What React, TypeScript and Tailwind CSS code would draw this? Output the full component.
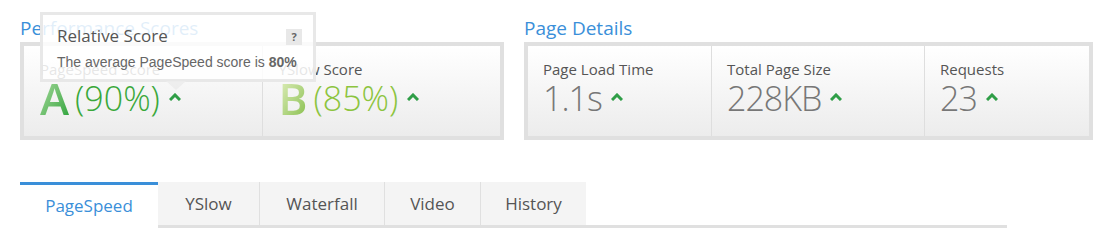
import React from 'react'

const font = { fontFamily: '"Open Sans", "Noto Sans", sans-serif' }

function Caret() {
  return (
    <svg width="12" height="8" viewBox="0 0 12 8" className="ml-[9px] mt-[-3px]">
      <path d="M1 7 L6 2 L11 7" fill="none" stroke="#2f9e47" strokeWidth="3" />
    </svg>
  )
}

function ScoreCell({ label, grade, pct, gradeClass, pctClass, last }: { label: string; grade: string; pct: string; gradeClass: string; pctClass: string; last?: boolean }) {
  return (
    <div className={`flex-1 pl-[16px] pt-[13px] ${last ? '' : 'border-r border-[#dedede]'}`}>
      <div className="text-[15px] leading-[20px] text-[#555]">{label}</div>
      <div className="flex items-center h-[42px] -mt-[2px]">
        <span className={`text-[44px] leading-[44px] font-semibold bg-clip-text text-transparent ${gradeClass}`}>{grade}</span>
        <span className={`text-[34px] leading-[40px] font-light ml-[6px] ${pctClass}`}>{pct}</span>
        <Caret />
      </div>
    </div>
  )
}

function DetailCell({ label, value, width, last }: { label: string; value: string; width: string; last?: boolean }) {
  return (
    <div className={`${width} pl-[15px] pt-[13px] ${last ? '' : 'border-r border-[#dedede]'}`}>
      <div className="text-[15px] leading-[20px] text-[#555]">{label}</div>
      <div className="flex items-center h-[42px] -mt-[2px]">
        <span className="text-[34px] leading-[40px] font-light text-[#777] tracking-[-1px]">{value}</span>
        <Caret />
      </div>
    </div>
  )
}

export default function App() {
  const tabs = ['YSlow', 'Waterfall', 'Video', 'History']
  const tabW = ['w-[102px]', 'w-[125px]', 'w-[96px]', 'w-[105px]']
  return (
    <div className="w-[1111px] h-[243px] bg-white pl-[20px] pt-[14px]" style={font}>
      <div className="flex gap-[20px]">
        <div className="w-[484px] relative">
          <h2 className="text-[19px] leading-[28px] text-[#3a8fd9]">Performance Scores</h2>
          <div className="flex h-[98px] border-4 border-[#e0e0e0] bg-gradient-to-b from-white to-[#ececec]">
            <ScoreCell label="PageSpeed Score" grade="A" pct="(90%)" gradeClass="bg-gradient-to-br from-[#a8dca0] to-[#27a33a]" pctClass="text-[#3aa83a]" />
            <ScoreCell label="YSlow Score" grade="B" pct="(85%)" gradeClass="bg-gradient-to-br from-[#e4f0c0] to-[#84bd44]" pctClass="text-[#8cc43e]" last />
          </div>
          <div className="absolute left-[20px] top-[-2px] w-[276px] h-[70px] border-[3px] border-[#e6e6e6]/90 bg-white/85 pl-[14px] pt-[10px]">
            <div className="flex items-center justify-between pr-[11px]">
              <span className="text-[17px] leading-[22px] text-[#555]">Relative Score</span>
              <span className="w-[16px] h-[16px] bg-[#e8e8e8] text-[11px] leading-[16px] text-center font-bold text-[#666] mt-[1px]">?</span>
            </div>
            <div className="mt-[6px] text-[14px] leading-[18px] text-[#666]" style={{ fontFamily: '"Liberation Sans", Arial, sans-serif' }}>
              The average PageSpeed score is <b>80%</b>
            </div>
            <div className="absolute left-[123px] bottom-[-11px] w-0 h-0 border-l-[10px] border-r-[10px] border-t-[9px] border-l-transparent border-r-transparent border-t-[#ececec]/90" />
          </div>
        </div>
        <div className="w-[569px]">
          <h2 className="text-[19px] leading-[28px] text-[#3a8fd9]">Page Details</h2>
          <div className="flex h-[98px] border-4 border-[#e0e0e0] bg-gradient-to-b from-white to-[#ececec]">
            <DetailCell label="Page Load Time" value="1.1s" width="w-[184px]" />
            <DetailCell label="Total Page Size" value="228KB" width="w-[213px]" />
            <DetailCell label="Requests" value="23" width="flex-1" last />
          </div>
        </div>
      </div>
      <div className="mt-[42px] flex w-[987px] border-b-[3px] border-[#e0e0e0] h-[46px]">
        <div className="w-[138px] border-t-[3px] border-[#3a8fd9] bg-white text-[#3a8fd9] text-[17px] flex items-center justify-center -mb-[3px] pb-[2px]">PageSpeed</div>
        {tabs.map((t, i) => (
          <div key={t} className={`${tabW[i]} bg-[#f4f4f4] text-[#555] text-[17px] flex items-center justify-center ${i < 3 ? 'border-r border-[#e0e0e0]' : ''}`}>{t}</div>
        ))}
      </div>
    </div>
  )
}
